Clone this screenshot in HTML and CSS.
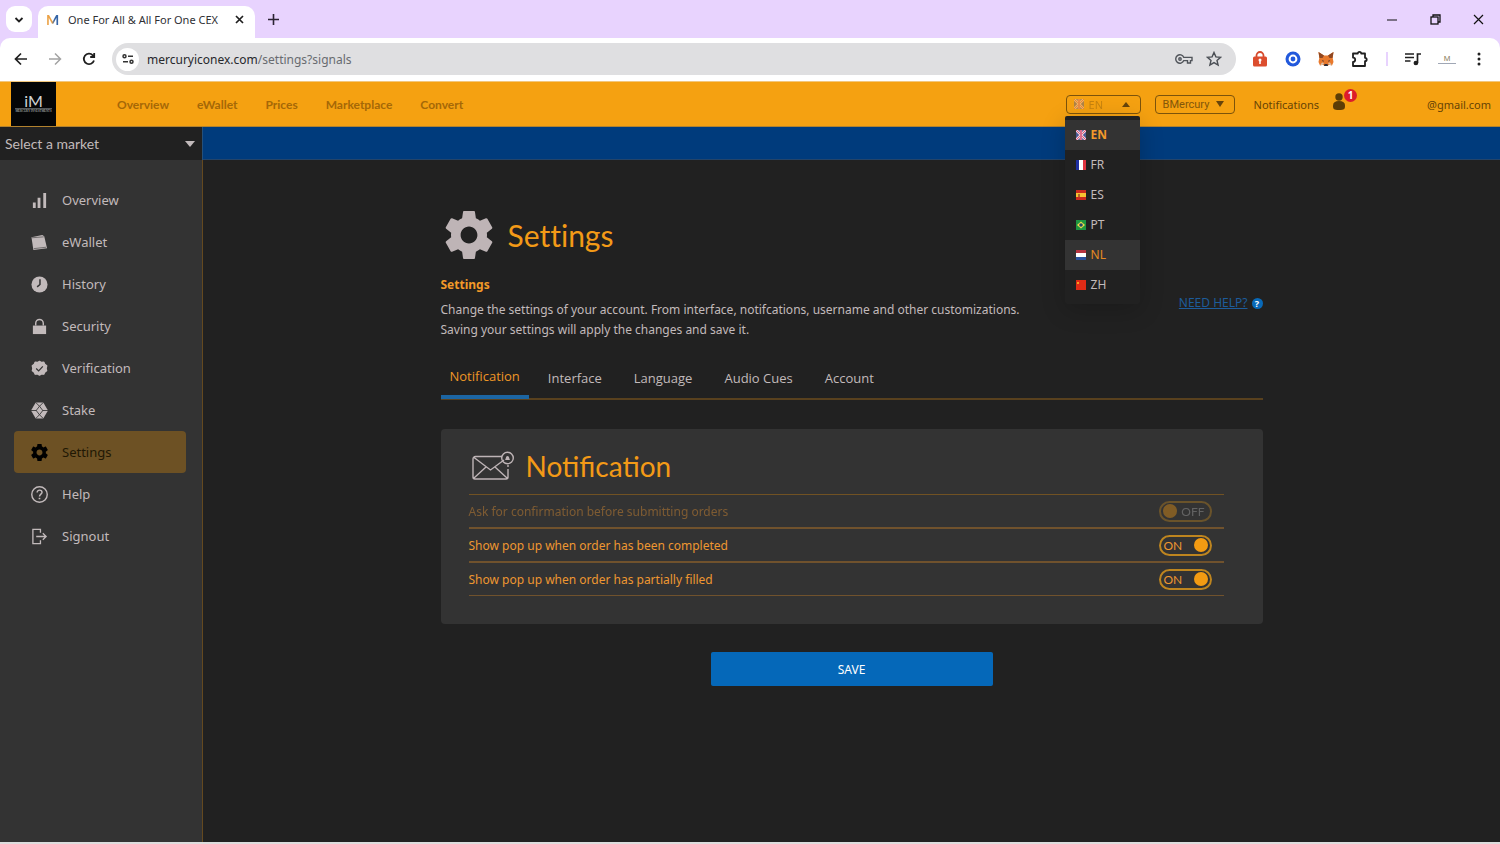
FILE: index.html
```html
<!DOCTYPE html>
<html lang="en">
<head>
<meta charset="utf-8">
<title>One For All &amp; All For One CEX</title>
<link rel="stylesheet" href="styles.css">
</head>
<body>
<svg class="defs" aria-hidden="true">
  <symbol id="gear" viewBox="2 2 20 20"><path fill="currentColor" d="M19.43 12.98c.04-.32.07-.64.07-.98s-.03-.66-.07-.98l2.11-1.65c.19-.15.24-.42.12-.64l-2-3.46c-.12-.22-.39-.3-.61-.22l-2.49 1c-.52-.4-1.08-.73-1.69-.98l-.38-2.65C14.46 2.18 14.25 2 14 2h-4c-.25 0-.46.18-.49.42l-.38 2.65c-.61.25-1.17.59-1.69.98l-2.49-1c-.23-.09-.49 0-.61.22l-2 3.46c-.13.22-.07.49.12.64l2.11 1.65c-.04.32-.07.65-.07.98s.03.66.07.98l-2.11 1.65c-.19.15-.24.42-.12.64l2 3.46c.12.22.39.3.61.22l2.49-1c.52.4 1.08.73 1.69.98l.38 2.65c.03.24.24.42.49.42h4c.25 0 .46-.18.49-.42l.38-2.65c.61-.25 1.17-.59 1.69-.98l2.49 1c.23.09.49 0 .61-.22l2-3.46c.12-.22.07-.49-.12-.64l-2.11-1.65zM12 15.5c-1.93 0-3.5-1.57-3.5-3.5s1.57-3.5 3.5-3.5 3.5 1.57 3.5 3.5-1.57 3.5-3.5 3.5z"/></symbol>
  <symbol id="uk" viewBox="0 0 10 10"><path fill="#4a5896" d="M0 0h10v10H0z"/><path stroke="#f4d3dc" stroke-width="2.6" d="M0 0l10 10M10 0L0 10"/><path stroke="#d5587c" d="M0 0l10 10M10 0L0 10"/><path stroke="#f4d3dc" stroke-width="2.4" d="M5 0v10"/><path stroke="#d0436c" stroke-width="1.4" d="M5 0v10"/></symbol>
</svg>

<div class="browser">
<div class="tabstrip">
  <button class="tab-search" aria-label="Search tabs"><svg width="10" height="8" viewBox="0 0 10 8"><path d="M1.5 2L5 5.5 8.500 2" fill="none" stroke="#1f1f1f" stroke-width="1.8"/></svg></button>
  <div class="tab">
    <span class="favicon">M</span>
    <span class="tab-title">One For All &amp; All For One CEX</span>
    <button class="plain" aria-label="Close tab"><svg width="9" height="9" viewBox="0 0 9 9"><path d="M1 1l7 7M8 1L1 8" stroke="#1f1f1f" stroke-width="1.700"/></svg></button>
  </div>
  <button class="plain new-tab" aria-label="New tab"><svg width="11" height="11" viewBox="0 0 11 11"><path d="M5.500 0v11M0 5.500h11" stroke="#2b2333" stroke-width="1.600"/></svg></button>
  <div class="window-controls">
    <button class="plain" aria-label="Minimize"><svg width="11" height="11" viewBox="0 0 11 11"><path d="M0 6h10" stroke="#111"/></svg></button>
    <button class="plain" aria-label="Restore"><svg width="11" height="11" viewBox="0 0 11 11" fill="none" stroke="#111" stroke-width="1.300"><rect x="1" y="3" width="7" height="7"/><path d="M3 3V1h7v7H8"/></svg></button>
    <button class="plain" aria-label="Close"><svg width="11" height="11" viewBox="0 0 11 11"><path d="M1 1l9 9M10 1l-9 9" stroke="#111" stroke-width="1.200"/></svg></button>
  </div>
</div>

<div class="toolbar">
  <button class="plain" aria-label="Back"><svg width="14" height="14" viewBox="0 0 14 14" fill="none" stroke="#1f1f1f" stroke-width="1.700"><path d="M13 7H2M7 1.500L1.500 7 7 12.500"/></svg></button>
  <button class="plain" aria-label="Forward"><svg width="14" height="14" viewBox="0 0 14 14" fill="none" stroke="#a3a3a3" stroke-width="1.500"><path d="M1 7h11M7 1.500L12.500 7 7 12.500"/></svg></button>
  <button class="plain" aria-label="Reload"><svg width="14" height="14" viewBox="0 0 14 14" fill="none" stroke="#1f1f1f" stroke-width="1.800"><path d="M12 8.500A5.200 5.200 0 1 1 10.800 3.300L12 4.500M12.200 1v4h-4"/></svg></button>
  <div class="address">
    <button class="site-info" aria-label="Site information"><svg width="12" height="10" viewBox="0 0 12 10" fill="none" stroke="#333" stroke-width="1.500"><circle cx="2.500" cy="2.300" r="1.500"/><path d="M6 2.300h5M1 7.700h5"/><circle cx="9.500" cy="7.700" r="1.500"/></svg></button>
    <span class="url">mercuryiconex.com<span>/settings?signals</span></span>
    <button class="plain" aria-label="Passwords"><svg width="18" height="12" viewBox="0 0 18 12" fill="none" stroke="#50545a" stroke-width="1.400"><path d="M8.800 4.400H17v3.200h-1.500V10h-3V7.600H8.800A4.200 4.200 0 1 1 8.800 4.400z"/><circle cx="5" cy="6" r="1.200"/></svg></button>
    <button class="plain" aria-label="Bookmark"><svg width="16" height="16" viewBox="0 0 16 16" fill="none" stroke="#4a4e54" stroke-width="1.400"><path d="M8 1.500l1.900 4.400 4.700.400-3.600 3.100 1.100 4.600L8 11.600 3.900 14 5 9.400 1.400 6.300l4.700-.400z"/></svg></button>
  </div>
  <div class="extensions">
    <svg width="16" height="16" viewBox="0 0 16 16"><path d="M4.500 7V4.500a3.500 3.500 0 0 1 7 0V7" fill="none" stroke="#d64a2c" stroke-width="1.800"/><rect x="1" y="5.500" width="14" height="10" rx="1.500" fill="#dc4d2e"/><circle cx="8" cy="9" r="1.500" fill="#fff"/><path d="M7.200 9h1.600v4H7.200z" fill="#fff"/></svg>
    <svg width="16" height="16" viewBox="0 0 16 16"><circle cx="8" cy="8" r="7.500" fill="#2259dc"/><circle cx="8" cy="8" r="3.400" fill="none" stroke="#fff" stroke-width="2"/></svg>
    <svg width="16" height="16" viewBox="0 0 16 16"><path d="M.500 1L6 4.500h4L15.500 1l-.800 6 .800 4-1.500 3.500-3-.800L9.500 15h-3L5 13.700l-3 .800L.500 11l.800-4z" fill="#e8792c"/><path d="M.500 1L6 4.500 4.500 7 1.500 7zM15.500 1L10 4.500 11.500 7l3 0z" fill="#8f4722"/><path d="M6.500 13h3l.500 2H6zM4 9l2 1-1 .800zM12 9l-2 1 1 .800z" fill="#2b2a35"/><path d="M2 14.500l3-1 1-1.500-2-.500zM14 14.500l-3-1-1-1.500 2-.500z" fill="#d9c2ae"/></svg>
    <button class="plain" aria-label="Extensions"><svg width="18" height="18" viewBox="0 0 18 18" fill="none" stroke="#202020" stroke-width="1.800"><path d="M2 3.500h4.800a1.700 1.700 0 0 1 3.400 0H14v4.300a1.700 1.700 0 0 1 0 3.400V16H2v-4a2.200 2.200 0 0 0 0-4.400z" stroke-linejoin="round"/></svg></button>
    <span class="divider"></span>
    <button class="plain" aria-label="Media"><svg width="16" height="14" viewBox="0 0 16 14" fill="none" stroke="#202020" stroke-width="1.700"><path d="M0 2h9M0 5.500h9M0 9h5.500M12.500 11V2H16"/><circle cx="10.900" cy="11" r="1.500" fill="#202020"/></svg></button>
    <span class="profile">M</span>
    <button class="plain" aria-label="Menu"><svg width="4" height="14" viewBox="0 0 4 14" fill="#202020"><circle cx="2" cy="2" r="1.500"/><circle cx="2" cy="7" r="1.500"/><circle cx="2" cy="12" r="1.500"/></svg></button>
  </div>
</div>
</div>

<header class="header">
  <a class="logo" href="#" aria-label="Mercury Investments"><span class="logo-mark">iM</span><span class="logo-name">MERCURY INVESTMENTS</span></a>
  <nav class="topnav">
    <a href="#">Overview</a><a href="#">eWallet</a><a href="#">Prices</a><a href="#">Marketplace</a><a href="#">Convert</a>
  </nav>
  <div class="account">
    <div class="lang">
      <button class="box lang-button" aria-expanded="true"><svg class="faded" width="10" height="10"><use href="#uk"/></svg><span class="faded">EN</span><i class="up"></i></button>
      <ul class="lang-menu">
        <li><button class="selected"><svg width="10" height="10"><use href="#uk"/></svg>EN</button></li>
        <li><button><svg width="10" height="10"><path fill="#fff" d="M0 0h10v10H0z"/><path fill="#1d2ea0" d="M0 0h3v10H0z"/><path fill="#df3340" d="M7 0h3v10H7z"/></svg>FR</button></li>
        <li><button><svg width="10" height="10"><path fill="#cc2a1e" d="M0 0h10v10H0z"/><path fill="#f8c331" d="M0 3h10v4H0z"/><path fill="#b5682a" d="M2 4h2v3H2z"/></svg>ES</button></li>
        <li><button><svg width="10" height="10"><path fill="#1d9440" d="M0 0h10v10H0z"/><path fill="#f0dc4a" d="M5 1.500L9 5 5 8.500 1 5z"/><circle cx="5" cy="5" r="1.800" fill="#23466b"/></svg>PT</button></li>
        <li><button class="hovered"><svg width="10" height="10"><path fill="#fff" d="M0 0h10v10H0z"/><path fill="#b53340" d="M0 0h10v3H0z"/><path fill="#28509c" d="M0 7h10v3H0z"/></svg>NL</button></li>
        <li><button><svg width="10" height="10"><path fill="#de2b16" d="M0 0h10v10H0z"/><path fill="#f5a11c" d="M1 2h2v2H1z"/></svg>ZH</button></li>
      </ul>
    </div>
    <label class="box theme"><select aria-label="Theme"><option>BMercury</option></select><i class="down"></i></label>
    <a class="notifications" href="#">Notifications
      <span class="person"><svg width="14" height="18" viewBox="0 0 14 18" fill="#5c3d06"><circle cx="7" cy="4" r="3.700"/><path d="M1 12.500C1 9.500 3 8 7 8s6 1.500 6 4.500c0 3.500-.500 4.500-6 4.500s-6-1-6-4.500z"/></svg><b>1</b></span>
    </a>
    <span class="email">@gmail.com</span>
  </div>
</header>

<div class="market-row">
  <label class="market"><select aria-label="Market"><option>Select a market</option></select><i class="down"></i></label>
  <div class="ticker"></div>
</div>

<div class="page">
  <nav class="sidebar">
    <a href="#"><svg viewBox="0 0 18 18"><path fill="currentColor" d="M2 11h3v6H2zM7 6h3v11H7zM13 1h3v16h-3z"/></svg>Overview</a>
    <a href="#"><svg viewBox="0 0 18 18"><path fill="currentColor" d="M.500 3.500L12 1l2 1.500 3 12.500-14.500 2z"/><path d="M3 15.500l13-1.500M1 4l12.500-1" stroke="#333" stroke-width=".6"/></svg>eWallet</a>
    <a href="#"><svg viewBox="0 0 18 18"><circle cx="9" cy="9" r="8.500" fill="currentColor"/><path d="M9.500 3.500V9l-3 2.500" fill="none" stroke="#333" stroke-width="1.600"/></svg>History</a>
    <a href="#"><svg viewBox="0 0 18 18"><path fill="currentColor" d="M2 8h14v9H2z"/><path d="M5 8V5.500a4 4 0 0 1 8 0V8" fill="none" stroke="currentColor" stroke-width="1.500"/></svg>Security</a>
    <a href="#"><svg viewBox="0 0 18 18"><path fill="currentColor" stroke="currentColor" stroke-linejoin="round" stroke-width="1.500" d="M9 1.500l2.100 1.200 2.500-.300 1 2.300 2 1.500L16 8.800l.500 2.500-2 1.500-1 2.200-2.400-.200L9 16l-2.100-1.200-2.400.200-1-2.200-2-1.500.500-2.500-.600-2.600 2-1.500 1-2.300 2.500.300z"/><path d="M5.500 9l2.600 2.500 4.400-4.800" fill="none" stroke="#333" stroke-width="1.300"/></svg>Verification</a>
    <a href="#"><svg viewBox="0 0 18 18"><path fill="currentColor" d="M5 .500h8L18 9l-5 8.500H5L0 9z"/><path d="M0 9h6M12 9h6M5 .500l4 4 4-4M5 17.500l4-4 4 4M9 4.500L5.500 9 9 13.500 12.500 9z" fill="none" stroke="#333" stroke-width=".9"/></svg>Stake</a>
    <a href="#" class="active"><svg><use href="#gear"/></svg>Settings</a>
    <a href="#"><svg viewBox="0 0 18 18" fill="none" stroke="currentColor" stroke-width="1.500"><circle cx="9" cy="9" r="8.200"/><path d="M6.500 7c0-3.700 5.200-3.300 5.200-.300C11.700 8.500 9 8.700 9 11"/><path d="M9 12.500V14" stroke-width="1.800"/></svg>Help</a>
    <a href="#"><svg viewBox="0 0 18 18" fill="none" stroke="currentColor" stroke-width="1.400"><path d="M10 5V1.500H2v15h8V13M5.500 9H16M12.500 5.500L16 9l-3.500 3.500"/></svg>Signout</a>
  </nav>

  <main class="main">
    <div class="content">
      <h1><svg width="48" height="48"><use href="#gear"/></svg>Settings</h1>
      <section class="intro">
        <div>
          <h2>Settings</h2>
          <p>Change the settings of your account. From interface, notifcations, username and other customizations.<br>Saving your settings will apply the changes and save it.</p>
        </div>
        <a class="help" href="#"><span>NEED HELP?</span><b>?</b></a>
      </section>
      <div class="tabs" role="tablist">
        <button role="tab" aria-selected="true" class="current">Notification</button>
        <button role="tab">Interface</button>
        <button role="tab">Language</button>
        <button role="tab">Audio Cues</button>
        <button role="tab">Account</button>
      </div>
      <form>
        <section class="card">
          <h2><svg width="43" height="30" viewBox="0 0 43 30" fill="none" stroke="#beb4b6" stroke-width="1.400"><path d="M30 5.500H3.500A2.500 2.500 0 0 0 1 8v18a2 2 0 0 0 2 2h31a2 2 0 0 0 2-2v-8M36 14v2M2 6.500L18.500 19 32 9M2 27l12-11M35 27L23 16"/><circle cx="35.500" cy="7" r="5.800"/><path d="M33 9c1-1 .500-4 2.500-4s1.500 3 2.500 4z" fill="#beb4b6" stroke="none"/></svg>Notification</h2>
          <div class="row off"><label for="confirm">Ask for confirmation before submitting orders</label><span class="switch"><input type="checkbox" id="confirm"><span>OFF</span></span></div>
          <div class="row"><label for="completed">Show pop up when order has been completed</label><span class="switch"><input type="checkbox" id="completed" checked><span>ON</span></span></div>
          <div class="row"><label for="partial">Show pop up when order has partially filled</label><span class="switch"><input type="checkbox" id="partial" checked><span>ON</span></span></div>
        </section>
        <button class="save" type="button">SAVE</button>
      </form>
    </div>
  </main>
</div>
<div class="taskbar"></div>
</body>
</html>
```
FILE: styles.css
```css
* { box-sizing: border-box; }
body {
  margin: 0;
  min-height: 100vh;
  display: flex;
  flex-direction: column;
  background: #212121;
  color: #c2babb;
  font-family: "Noto Sans", "Open Sans", sans-serif;
  font-size: 12px;
}
button, select, input { font: inherit; color: inherit; margin: 0; }
button { border: 0; background: none; padding: 0; cursor: pointer; }
a { color: inherit; text-decoration: none; }
svg { flex: none; }
h1, h2, p, ul { margin: 0; padding: 0; font-weight: 400; }
.defs { position: absolute; width: 0; height: 0; }
.plain { display: flex; align-items: center; justify-content: center; flex: none; }

.browser { background: #e8d3fe; }
.tabstrip { display: flex; align-items: center; height: 38px; padding-left: 6px; }
.tab-search { width: 26px; height: 26px; border-radius: 9px; background: #fff; }
.tab {
  display: flex; align-items: center; gap: 8px;
  width: 217px; height: 32px; margin: 6px 0 0 6px; padding: 0 11px 6px 8px;
  border-radius: 10px 10px 0 0; background: #fff;
}
.favicon { width: 14px; font: 700 14px Lato, sans-serif; background: linear-gradient(90deg, #eba246 40%, #3464a6 60%); -webkit-background-clip: text; background-clip: text; color: transparent; }
.tab-title { flex: 1; color: #303034; font: 11px "Noto Sans", sans-serif; white-space: nowrap; }
.new-tab { margin-left: 13px; }
.window-controls { display: flex; gap: 32px; margin-left: auto; padding-right: 16px; }

.toolbar { display: flex; align-items: center; gap: 20px; height: 43px; padding: 0 19px 1px 14px; background: #fff; border-radius: 10px 10px 0 0; }
.address { display: flex; align-items: center; flex: 1; gap: 13px; height: 32px; margin-left: -4px; padding: 0 14px 0 4px; border-radius: 16px; background: #dfdfe1; }
.site-info { display: grid; place-items: center; width: 23px; height: 23px; border-radius: 50%; background: #fff; }
.url { flex: 1; margin-left: -5px; color: #27282c; font: 12px "Noto Sans", sans-serif; }
.url span { color: #686b70; }
.extensions { display: flex; align-items: center; gap: 17px; margin-left: -4px; }
.divider { width: 2px; height: 14px; background: #e8d3fe; }
.profile { width: 18px; border-bottom: 1px solid #a0a7b5; font: 8px/8px "Liberation Sans", sans-serif; text-align: center; color: #8a7d5a; }
.extensions button:last-child { margin-left: 4px; }

.header { display: flex; align-items: center; height: 46px; padding: 0 9px 0 11px; background: #f5a111; border-top: 1px solid #f2c77c; border-bottom: 1px solid #b2822e; color: #664305; }
.logo { display: flex; flex-direction: column; align-items: center; justify-content: center; width: 45px; height: 44px; overflow: hidden; background: #050607; color: #d2d5d6; text-align: center; }
.logo-mark { font: 16px/14px Lato, sans-serif; }
.logo-name { border-top: 1px solid #55595b; font: 3px/5px "Liberation Serif", serif; white-space: nowrap; }
.topnav { display: flex; gap: 28px; margin-left: 61px; color: #a56807; font: 700 12px Lato, sans-serif; }
.account { display: flex; align-items: center; margin-left: auto; }
.box { display: flex; align-items: center; height: 19px; border: 1px solid #7c530b; border-radius: 4px; color: #82560a; }
.lang { position: relative; }
.lang-button { width: 75px; padding: 0 10px 0 7px; gap: 5px; font-size: 11px; }
.faded { opacity: .4; }
.up, .down { width: 0; height: 0; border: solid transparent; border-width: 0 4px; margin-left: auto; pointer-events: none; }
.up { border-bottom: 5px solid #66440b; }
.down { border-top: 6px solid #66440b; }
.theme { width: 80px; margin-left: 14px; padding: 0 10px 0 7px; font: 11px Roboto, sans-serif; }
select { appearance: none; border: 0; padding: 0; background: transparent; }
.notifications { display: flex; align-items: center; gap: 13px; margin-left: 19px; font-size: 11px; }
.person { position: relative; height: 22px; width: 14px; }
.person b { position: absolute; left: 12px; top: -4px; width: 13px; height: 13px; border-radius: 50%; background: #dc1c2b; color: #fff; font-size: 10px; line-height: 13px; text-align: center; }
.email { margin-left: 81px; font-size: 11px; }

.lang-menu { position: absolute; z-index: 2; top: 21px; left: -1px; width: 75px; padding: 4px 0; list-style: none; background: #212121; border-radius: 2px; box-shadow: 0 6px 24px rgba(0, 0, 0, .2); color: #c2babb; }
.lang-menu button { display: flex; align-items: center; gap: 5px; width: 100%; height: 30px; padding-left: 11px; font-size: 12px; }
.lang-menu .selected { background: #333; color: #f29a2b; font-weight: 700; }
.lang-menu .hovered { background: #333; color: #e58a22; }

.market-row { display: flex; height: 33px; }
.market { display: flex; align-items: center; width: 203px; padding: 0 7px 0 5px; background: #212121; border-right: 1px solid #25507b; font: 14px Lato, sans-serif; }
.market .down { border-width: 6px 5px 0; border-top-color: #c2babb; }
.ticker { flex: 1; background: #003b7c; border-bottom: 1px solid #244469; }

.page { display: flex; flex: 1; }
.sidebar { width: 203px; padding: 19px 16px 17px 14px; background: #333; border-right: 1px solid #64491f; font-size: 13px; }
.sidebar a { display: flex; align-items: center; gap: 14px; height: 42px; padding-left: 17px; border-radius: 4px; }
.sidebar svg { width: 17px; height: 17px; }
.sidebar .active { background: #6d5124; color: #211804; }
.sidebar .active svg { color: #000; }
.main { flex: 1; padding: 51px 24px; }
.content { max-width: 822px; margin: 0 auto; }
h1 { display: flex; align-items: center; gap: 15px; height: 48px; padding-left: 4px; color: #f39a17; font: 30px Lato, sans-serif; font-variant-ligatures: none; }
h1 svg { color: #beb4b6; }
.intro { display: flex; justify-content: space-between; margin-top: 16px; line-height: 20px; }
.intro h2 { margin-bottom: 5px; color: #f39a28; font-size: 12px; font-weight: 700; }
.help { display: flex; align-items: center; gap: 4px; height: 20px; margin-top: 18px; color: #1d5c9b; white-space: nowrap; }
.help span { text-decoration: underline; }
.help b { width: 11px; height: 11px; border-radius: 50%; background: #0869b8; color: #fff; font-size: 9px; line-height: 11px; text-align: center; }
.tabs { display: flex; align-items: stretch; height: 46px; margin-top: 14px; border-bottom: 2px solid #59411e; font: 13px "Open Sans", sans-serif; }
.tabs button { padding: 3px 16px 0; }
.tabs .current { margin: 0 3px -1px 0; padding: 2px 9px 0; border-bottom: 4px solid #1c65a2; color: #ef9626; }
.card { margin-top: 29px; padding: 21px 39px 28px 28px; border-radius: 4px; background: #333; color: #ee9731; }
.card h2 { display: flex; align-items: center; gap: 11px; height: 45px; padding: 0 0 12px 3px; border-bottom: 1px solid #715223; color: #f39a17; font: 28px Lato, sans-serif; }
.row { display: flex; align-items: center; justify-content: space-between; height: 34px; padding-right: 12px; border-bottom: 2px solid #70522d; }
.row.off label, .row.off .switch { opacity: .4; }
.row:last-child { height: 33px; border-bottom-width: 1px; }
.switch { display: grid; width: 53px; height: 21px; }
.switch > * { grid-area: 1 / 1; }
.switch input { appearance: none; display: flex; align-items: center; border: 2px solid #be851f; border-radius: 11px; padding: 0 2px; }
.switch input::before { content: ""; width: 14px; height: 14px; border-radius: 50%; background: #f39b12; }
.switch input:checked::before { margin-left: auto; }
.switch span { align-self: center; padding: 0 5px; font: 12px Lato, sans-serif; pointer-events: none; }
.off .switch span { justify-self: end; padding-right: 7px; color: #aaa; }
.save { display: block; width: 282px; height: 34px; margin: 28px auto 0; border-radius: 2px; background: #0568b9; color: #fff; }
.taskbar { height: 2px; background: #ddd; }
```
